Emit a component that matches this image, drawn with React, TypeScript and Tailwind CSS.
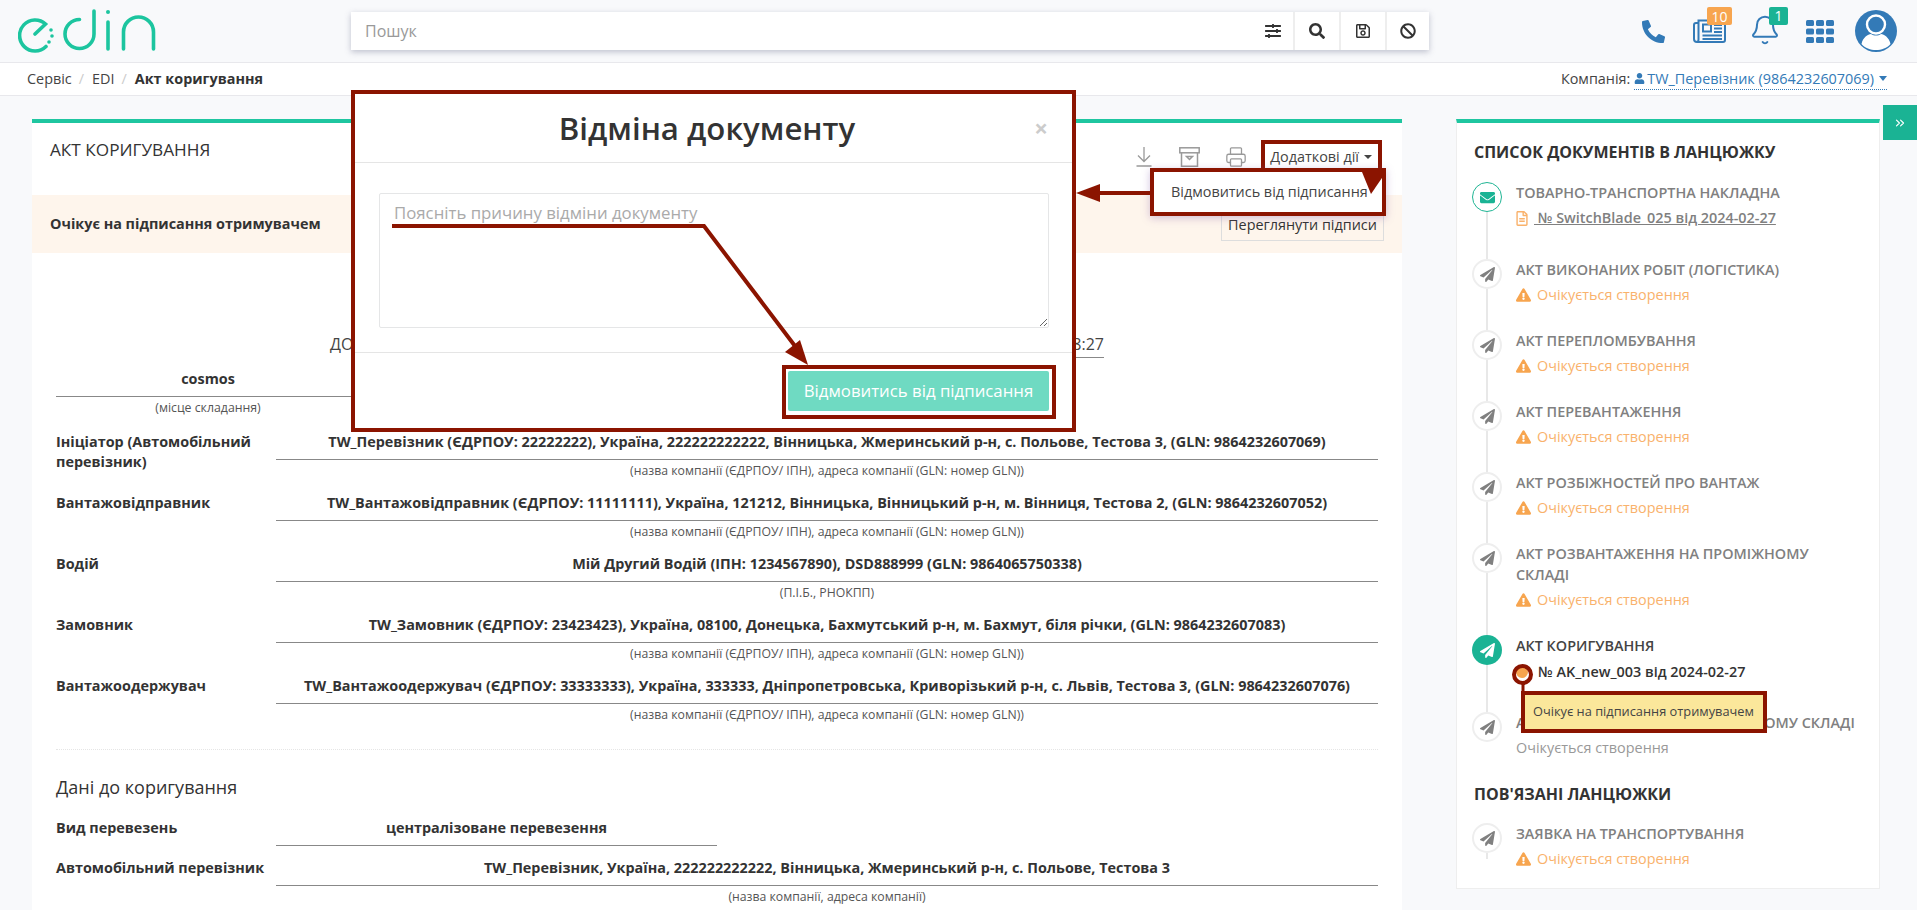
import React from 'react';
import {
  FaBan,
  FaEnvelope,
  FaExclamationTriangle,
  FaPaperPlane,
  FaPhoneAlt,
  FaRegFileAlt,
  FaRegSave,
  FaSearch,
  FaSlidersH,
  FaUser,
} from 'react-icons/fa';
import { Bell, ChevronsRight, Printer } from 'lucide-react';

const parties = [
  {
    label: 'Ініціатор (Автомобільний перевізник)',
    value: 'TW_Перевізник (ЄДРПОУ: 22222222), Україна, 222222222222, Вінницька, Жмеринський р-н, с. Польове, Тестова 3, (GLN: 9864232607069)',
    hint: '(назва компанії (ЄДРПОУ/ ІПН), адреса компанії (GLN: номер GLN))',
    height: 'h-[61px]',
  },
  {
    label: 'Вантажовідправник',
    value: 'TW_Вантажовідправник (ЄДРПОУ: 11111111), Україна, 121212, Вінницька, Вінницький р-н, м. Вінниця, Тестова 2, (GLN: 9864232607052)',
    hint: '(назва компанії (ЄДРПОУ/ ІПН), адреса компанії (GLN: номер GLN))',
    height: 'h-[61px]',
  },
  {
    label: 'Водій',
    value: 'Мій Другий Водій (ІПН: 1234567890), DSD888999 (GLN: 9864065750338)',
    hint: '(П.І.Б., РНОКПП)',
    height: 'h-[61px]',
  },
  {
    label: 'Замовник',
    value: 'TW_Замовник (ЄДРПОУ: 23423423), Україна, 08100, Донецька, Бахмутський р-н, м. Бахмут, біля річки, (GLN: 9864232607083)',
    hint: '(назва компанії (ЄДРПОУ/ ІПН), адреса компанії (GLN: номер GLN))',
    height: 'h-[61px]',
  },
  {
    label: 'Вантажоодержувач',
    value: 'TW_Вантажоодержувач (ЄДРПОУ: 33333333), Україна, 333333, Дніпропетровська, Криворізький р-н, с. Львів, Тестова 3, (GLN: 9864232607076)',
    hint: '(назва компанії (ЄДРПОУ/ ІПН), адреса компанії (GLN: номер GLN))',
    height: 'h-[61px]',
  },
];

function Logo() {
  return (
    <svg width="140" height="44" viewBox="18 8 140 44" fill="none" stroke="#1cc59f" strokeWidth="3.6" strokeLinecap="round">
      <path d="M35 33 L45.5 23 A15.5 15.5 0 1 0 46 45.5" />
      <circle cx="51" cy="29" r="1.8" fill="#1cc59f" stroke="none" />
      <circle cx="52" cy="35" r="1.8" fill="#1cc59f" stroke="none" />
      <circle cx="49" cy="41" r="1.8" fill="#1cc59f" stroke="none" />
      <path d="M94 10 V33 A14.5 14.5 0 1 1 79.5 18.5" />
      <path d="M108 21 V48" />
      <circle cx="108" cy="11" r="2" fill="#1cc59f" stroke="none" />
      <path d="M123.5 48 V31 A15 15 0 0 1 153.5 31 V48" />
    </svg>
  );
}

function Avatar() {
  return (
    <svg width="42" height="42" viewBox="0 0 42 42">
      <circle cx="21" cy="21" r="21" fill="#337ab7" />
      <circle cx="21" cy="14.5" r="9" fill="#337ab7" stroke="#fff" strokeWidth="2.4" />
      <path d="M6.5 34 C8 27 13 24.5 16 24 C19 26 23 26 26 24 C29 24.5 34 27 35.5 34 C32 38 26.5 40 21 40 C15.5 40 10 38 6.5 34 Z" fill="#fff" />
    </svg>
  );
}

function NewsIcon() {
  return (
    <svg className="mt-[3px]" width="33" height="24" viewBox="0 0 33 24" fill="none" stroke="#337ab7" strokeWidth="2">
      <path d="M5.5 4 H3 Q1 4 1 6 V20 Q1 23 4 23 H30 Q32 23 32 21 V1.5 H5.5 V20.5 Q5.5 23 3.5 23" />
      <rect x="10" y="5.5" width="8" height="7" />
      <path d="M21 6 H29 M21 9.5 H29 M21 13 H29 M9.5 16.5 H29 M9.5 20 H29" strokeWidth="1.8" />
    </svg>
  );
}

function GridIcon() {
  const cells = [0, 1, 2, 3, 4, 5, 6, 7, 8];
  return (
    <svg className="ml-[25px]" width="28" height="23" viewBox="0 0 28 23" fill="#337ab7">
      {cells.map(i => (
        <rect key={i} x={(i % 3) * 10} y={Math.floor(i / 3) * 8.5} width="8" height="6" rx="1.5" />
      ))}
    </svg>
  );
}

function SearchBar() {
  return (
    <div className="ml-[193px] flex h-[38px] w-[1078px] items-center bg-white shadow-[0_2px_6px_rgba(120,125,150,0.45)]">
      <div className="flex-1 pl-[14px] text-[16px] text-[#999]">Пошук</div>
      <div className="flex h-full w-[46px] items-center justify-center pl-[6px] text-[16px] text-[#333]"><FaSlidersH /></div>
      <div className="flex h-full w-[46px] items-center justify-center border-l-2 border-[#eee] text-[16px] text-[#333]"><FaSearch /></div>
      <div className="flex h-full w-[46px] items-center justify-center border-l-2 border-[#eee] text-[16px] text-[#333]"><FaRegSave /></div>
      <div className="flex h-full w-[44px] items-center justify-center border-l-2 border-[#eee] text-[16px] text-[#333]"><FaBan /></div>
    </div>
  );
}

function Header() {
  return (
    <header className="flex h-[63px] items-center border-b border-[#e8e8ec] bg-[#f8f9fb] pl-[18px]">
      <Logo />
      <SearchBar />
      <div className="ml-auto flex items-center pr-[20px] text-[#337ab7]">
        <FaPhoneAlt className="h-[23px] w-[23px]" />
        <div className="relative ml-[28px] h-[30px] w-[33px]">
          <NewsIcon />
          <span className="absolute left-[14px] top-[-9px] flex h-[18px] w-[25px] items-center justify-center rounded-[2px] bg-[#f7a54f] text-[14px] text-white">10</span>
        </div>
        <div className="relative mb-[3px] ml-[23px] h-[32px] w-[32px]">
          <Bell className="h-[32px] w-[32px]" strokeWidth={1.5} />
          <span className="absolute left-[20px] top-[-7px] flex h-[18px] w-[19px] items-center justify-center rounded-[2px] bg-[#1ab394] text-[14px] text-white">1</span>
        </div>
        <GridIcon />
        <div className="ml-[21px]"><Avatar /></div>
      </div>
    </header>
  );
}

function Breadcrumbs() {
  return (
    <div className="flex h-[33px] items-center border-b border-[#e8e8ec] bg-white pl-[27px] pr-[30px] text-[14.4px] text-[#444]">
      <span>Сервіс</span>
      <span className="ml-[7px] text-[#ccc]">/</span>
      <span className="ml-[8px]">EDI</span>
      <span className="ml-[7px] text-[#ccc]">/</span>
      <span className="ml-[8px] font-bold text-[#333]">Акт коригування</span>
      <span className="ml-auto">Компанія:</span>
      <span className="ml-[4px] flex items-center gap-[2px] border-b border-dotted border-[#337ab7] text-[#337ab7]">
        <FaUser className="h-[11px] w-[11px]" />
        TW_Перевізник (9864232607069)
        <span className="ml-[3px] border-x-[4px] border-t-[5px] border-x-transparent border-t-[#337ab7]" />
      </span>
    </div>
  );
}

function DocToolbar() {
  return (
    <div className="mt-[22px] flex h-[24px] items-center pr-[30px] text-[#999]">
      <svg width="16" height="20" viewBox="0 0 16 20" fill="none" stroke="#999" strokeWidth="1.3">
        <path d="M8 0 V14 M2 8.5 L8 14.5 L14 8.5 M0.5 19 H15.5" />
      </svg>
      <svg className="ml-[27px]" width="21" height="20" viewBox="0 0 21 20" fill="none" stroke="#999" strokeWidth="1.5">
        <rect x="0.8" y="0.8" width="19.4" height="5" />
        <path d="M2.5 6 V19.2 H18.5 V6 M7.5 9.5 H13.5 L10.5 12.5 Z" />
      </svg>
      <Printer className="ml-[25px] h-[22px] w-[22px]" strokeWidth={1.4} />
      <span className="ml-[23px] text-[14.4px] text-[#444]">Додаткові дії</span>
      <span className="ml-[5px] border-x-[4px] border-t-[4px] border-x-transparent border-t-[#444]" />
    </div>
  );
}

function MainCard() {
  return (
    <main className="h-[900px] w-[1370px] shrink-0 border-t-4 border-[#1fc6a0] bg-white">
      <div className="flex h-[72px] items-start justify-between pl-[18px]">
        <h2 className="mt-[15px] text-[17.2px] leading-[24px] text-[#333]">АКТ КОРИГУВАННЯ</h2>
        <DocToolbar />
      </div>
      <div className="flex h-[58px] items-center justify-between bg-[#fef5ec] px-[18px]">
        <span className="text-[14.4px] font-bold text-[#333]">Очікує на підписання отримувачем</span>
        <span className="mt-[2px] flex h-[32px] w-[163px] items-center justify-center border border-[#ddd] text-[14.4px] text-[#333]">Переглянути підписи</span>
      </div>
      <div className="px-[24px] pt-[80px]">
        <div className="ml-[274px] flex h-[25px] w-[774px] items-start justify-between text-[16px] leading-[22px] text-[#444]">
          <span>ДО ТОВАРНО-ТРАНСПОРТНОЇ НАКЛАДНОЇ</span>
          <span className="h-[25px] border-b border-[#888]">2024-02-27 18:27</span>
        </div>
        <div className="mt-[11px] h-[63px] w-[304px] text-center">
          <div className="h-[28px] border-b border-[#888] text-[14.4px] font-bold leading-[20px] text-[#333]">cosmos</div>
          <div className="mt-[3px] text-[12.3px] leading-[16px] text-[#555]">(місце складання)</div>
        </div>
        {parties.map(p => (
          <div key={p.label} className={`grid grid-cols-[220px_1fr] ${p.height}`}>
            <div className="pr-[10px] text-[14.4px] font-bold leading-[20px] text-[#333]">{p.label}</div>
            <div className="text-center">
              <div className="h-[28px] border-b border-[#888] text-[14.4px] font-bold leading-[20px] text-[#333]">{p.value}</div>
              <div className="mt-[3px] text-[12.25px] leading-[16px] text-[#555]">{p.hint}</div>
            </div>
          </div>
        ))}
        <div className="mt-[12px] border-t border-dotted border-[#e5e5e5]" />
        <h3 className="mt-[24px] text-[18px] leading-[26px] text-[#333]">Дані до коригування</h3>
        <div className="mt-[18px] grid h-[40px] grid-cols-[220px_441px]">
          <div className="text-[14.4px] font-bold leading-[20px] text-[#333]">Вид перевезень</div>
          <div className="h-[28px] border-b border-[#888] text-center text-[14.4px] font-bold leading-[20px] text-[#333]">централізоване перевезення</div>
        </div>
        <div className="grid grid-cols-[220px_1fr]">
          <div className="text-[14.4px] font-bold leading-[20px] text-[#333]">Автомобільний перевізник</div>
          <div className="text-center">
            <div className="h-[28px] border-b border-[#888] text-[14.4px] font-bold leading-[20px] text-[#333]">TW_Перевізник, Україна, 222222222222, Вінницька, Жмеринський р-н, с. Польове, Тестова 3</div>
            <div className="mt-[3px] text-[12.25px] leading-[16px] text-[#555]">(назва компанії, адреса компанії)</div>
          </div>
        </div>
      </div>
    </main>
  );
}

function PendingNote() {
  return (
    <div className="mt-[5px] flex items-center text-[14.4px] leading-[20px] text-[#f9b26c]">
      <FaExclamationTriangle className="h-[14px] w-[15px] text-[#f7a54f]" />
      <span className="ml-[6px]">Очікується створення</span>
    </div>
  );
}

function StepCircle() {
  return (
    <div className="flex h-[30px] w-[30px] shrink-0 items-center justify-center rounded-full border-2 border-[#eee] bg-white text-[#808080]">
      <FaPaperPlane className="h-[15px] w-[15px]" />
    </div>
  );
}

function Step({ title, height, children }: { title: string; height: string; children: React.ReactNode }) {
  return (
    <div className={`flex ${height}`}>
      <div className="flex w-[30px] shrink-0 flex-col items-center">
        <StepCircle />
        <div className="w-[2px] flex-1 bg-[#e8e8e8]" />
      </div>
      <div className="ml-[14px] w-[340px]">
        <div className="text-[14.4px] font-semibold leading-[21px] text-[#808080]">{title}</div>
        {children}
      </div>
    </div>
  );
}

function Sidebar() {
  return (
    <aside className="ml-[54px] h-[770px] w-[424px] shrink-0 border-x border-b border-t-4 border-[#eee] border-t-[#1fc6a0] bg-white pl-[15px]">
      <h2 className="ml-[2px] mt-[18px] text-[16px] font-bold leading-[22px] text-[#333]">СПИСОК ДОКУМЕНТІВ В ЛАНЦЮЖКУ</h2>
      <div className="mt-[19px]">
        <div className="flex h-[77px]">
          <div className="flex w-[30px] shrink-0 flex-col items-center">
            <div className="flex h-[30px] w-[30px] shrink-0 items-center justify-center rounded-full border border-[#1fb594] bg-white text-[#1ab394]">
              <FaEnvelope className="h-[15px] w-[15px]" />
            </div>
            <div className="w-[2px] flex-1 bg-[#e8e8e8]" />
          </div>
          <div className="ml-[14px]">
            <div className="text-[14.4px] font-semibold leading-[21px] text-[#808080]">ТОВАРНО-ТРАНСПОРТНА НАКЛАДНА</div>
            <div className="mt-[5px] flex items-center text-[14.4px] font-semibold leading-[20px] text-[#808080]">
              <FaRegFileAlt className="h-[15px] w-[12px] text-[#f9b26c]" />
              <span className="ml-[6px] whitespace-pre underline"> № SwitchBlade_025 від 2024-02-27</span>
            </div>
          </div>
        </div>
        <Step title="АКТ ВИКОНАНИХ РОБІТ (ЛОГІСТИКА)" height="h-[71px]"><PendingNote /></Step>
        <Step title="АКТ ПЕРЕПЛОМБУВАННЯ" height="h-[71px]"><PendingNote /></Step>
        <Step title="АКТ ПЕРЕВАНТАЖЕННЯ" height="h-[71px]"><PendingNote /></Step>
        <Step title="АКТ РОЗБІЖНОСТЕЙ ПРО ВАНТАЖ" height="h-[71px]"><PendingNote /></Step>
        <Step title="АКТ РОЗВАНТАЖЕННЯ НА ПРОМІЖНОМУ СКЛАДІ" height="h-[92px]"><PendingNote /></Step>
        <div className="flex h-[77px]">
          <div className="flex w-[30px] shrink-0 flex-col items-center">
            <div className="flex h-[30px] w-[30px] shrink-0 items-center justify-center rounded-full bg-[#1ab394] text-white">
              <FaPaperPlane className="h-[15px] w-[15px]" />
            </div>
            <div className="w-[2px] flex-1 bg-[#e8e8e8]" />
          </div>
          <div className="ml-[14px]">
            <div className="text-[14.4px] font-semibold leading-[21px] text-[#444]">АКТ КОРИГУВАННЯ</div>
            <div className="mt-[6px] flex items-center text-[14.4px] font-semibold leading-[20px] text-[#333]">
              <span className="h-[12px] w-[12px] rounded-full bg-[#f7a54f]" />
              <span className="ml-[10px]">№ AK_new_003 від 2024-02-27</span>
            </div>
          </div>
        </div>
        <div className="flex h-[71px]">
          <StepCircle />
          <div className="ml-[14px]">
            <div className="whitespace-nowrap text-[14.4px] font-semibold leading-[21px] text-[#808080]">АКТ ЗАВАНТАЖЕННЯ НА ПРОМІЖНОМУ СКЛАДІ</div>
            <div className="mt-[5px] text-[14.4px] leading-[20px] text-[#999]">Очікується створення</div>
          </div>
        </div>
      </div>
      <h2 className="ml-[2px] text-[16px] font-bold leading-[22px] text-[#333]">ПОВ'ЯЗАНІ ЛАНЦЮЖКИ</h2>
      <div className="mt-[18px]">
        <Step title="ЗАЯВКА НА ТРАНСПОРТУВАННЯ" height="h-[36px]"><PendingNote /></Step>
      </div>
    </aside>
  );
}

function CancelModal() {
  return (
    <div className="absolute left-[351px] top-[90px] flex h-[342px] w-[725px] flex-col border-4 border-[#8b1400] bg-white">
      <div className="relative flex h-[69px] shrink-0 items-center justify-center border-b border-[#e5e5e5] pr-[13px]">
        <h1 className="text-[31.2px] font-semibold leading-[40px] text-[#333]">Відміна документу</h1>
        <span className="absolute right-[24px] top-[14px] text-[24px] font-bold leading-[40px] text-[#ccc]">×</span>
      </div>
      <div className="h-[190px] shrink-0 border-b border-[#e5e5e5] pl-[24px] pr-[23px] pt-[30px]">
        <textarea
          readOnly
          placeholder="Поясніть причину відміни документу"
          className="block h-[135px] w-full rounded-[2px] border border-[#e5e6e7] px-[14px] py-[7px] text-[16.8px] leading-[24px] placeholder:text-[#aaa]"
        />
      </div>
      <div className="flex flex-1 justify-end pr-[23px] pt-[18px]">
        <button className="h-[40px] w-[261px] rounded-[2px] bg-[#6fdac2] text-[16.8px] text-white">Відмовитись від підписання</button>
      </div>
    </div>
  );
}

function Annotations() {
  return (
    <>
      <div className="absolute left-[1261px] top-[140px] h-[32px] w-[121px] border-4 border-[#8b1400]" />
      <div className="absolute left-[1150px] top-[168px] flex h-[48px] w-[236px] items-center border-4 border-[#8b1400] bg-white pl-[17px] text-[14.4px] text-[#444] shadow-[0_2px_8px_rgba(130,90,170,0.35)]">
        Відмовитись від підписання
      </div>
      <div className="absolute left-[782px] top-[365px] h-[54px] w-[274px] border-4 border-[#8b1400]" />
      <svg className="pointer-events-none absolute left-0 top-0" width="1917" height="910" fill="none">
        <path d="M392 226 H704 L798 350" stroke="#8b1400" strokeWidth="4" />
        <polygon points="808,365 785,352 800,340" fill="#8b1400" />
        <path d="M1090 193 H1150" stroke="#8b1400" strokeWidth="4" />
        <polygon points="1076,193 1100,184 1100,202" fill="#8b1400" />
        <polygon points="1362,172 1386,172 1371,194" fill="#8b1400" />
        <path d="M1523 684 V692" stroke="#8b1400" strokeWidth="3" />
      </svg>
      <div className="absolute left-[1512px] top-[664px] h-[21px] w-[21px] rounded-full border-4 border-[#8b1400]" />
      <div className="absolute left-[1521px] top-[691px] flex h-[42px] w-[246px] items-center border-4 border-[#8b1400] bg-[#fbe79b] pl-[8px] text-[12.8px] text-[#444]">
        Очікує на підписання отримувачем
      </div>
    </>
  );
}

export default function App() {
  return (
    <div className="relative h-[910px] w-[1917px] overflow-hidden bg-[#f8f9fb] font-['Open_Sans',sans-serif]">
      <Header />
      <Breadcrumbs />
      <div className="flex pl-[32px] pt-[23px]">
        <MainCard />
        <Sidebar />
      </div>
      <div className="absolute right-0 top-[105px] flex h-[35px] w-[34px] items-center justify-center bg-[#1ab394] text-white">
        <ChevronsRight className="h-[14px] w-[14px]" />
      </div>
      <CancelModal />
      <Annotations />
    </div>
  );
}
